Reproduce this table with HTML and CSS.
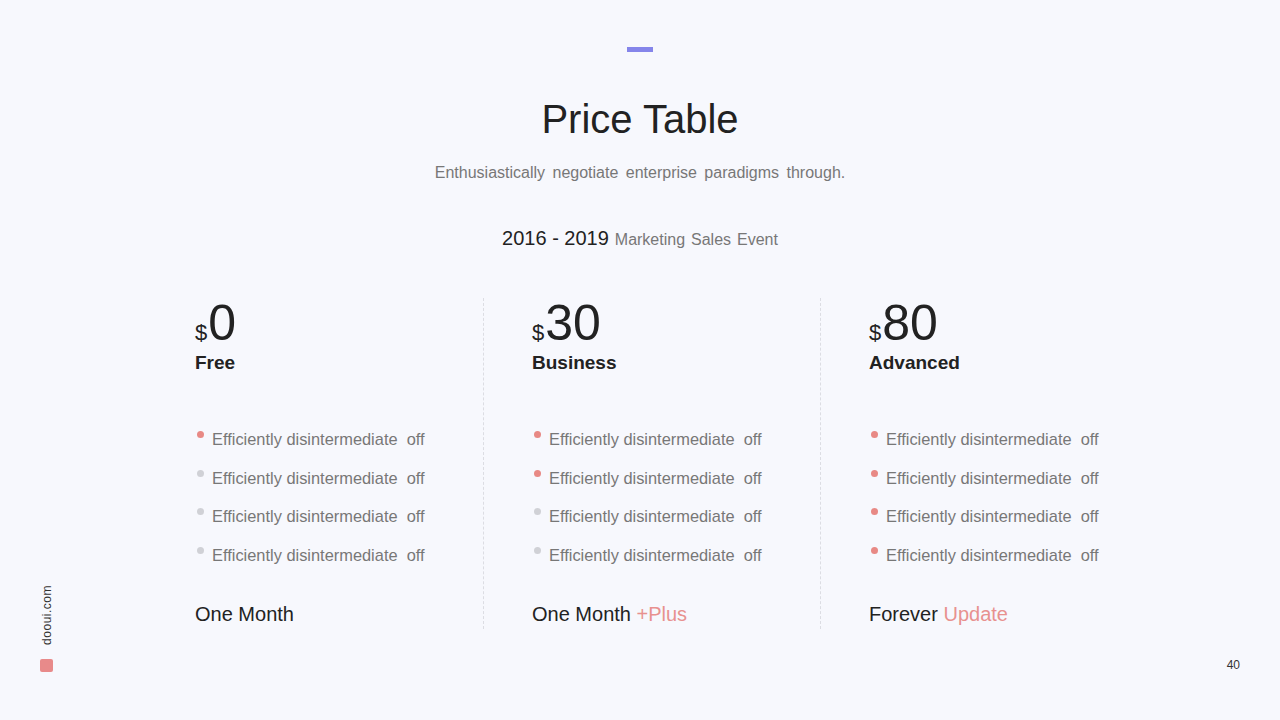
FILE: index.html
```html
<!DOCTYPE html>
<html lang="en">
<head>
  <meta charset="utf-8" />
  <title>Price Table</title>
  <link rel="stylesheet" href="styles.css">
</head>
<body>

  <div class="slide">
    <!-- 제목 -->
    <div class="accent-bar"></div>
    <h1 class="title">Price Table</h1>
    <p class="subtitle">Enthusiastically negotiate enterprise paradigms through.</p>
    <p class="event"><span class="event-year">2016 - 2019</span> Marketing Sales Event</p>

    <!-- 가격표 -->
    <div class="plans">
      <div class="plan">
        <div class="price"><span class="currency">$</span>0</div>
        <div class="plan-name">Free</div>
        <ul class="features">
          <li><span class="dot on"></span>Efficiently disintermediate&nbsp; off</li>
          <li><span class="dot"></span>Efficiently disintermediate&nbsp; off</li>
          <li><span class="dot"></span>Efficiently disintermediate&nbsp; off</li>
          <li><span class="dot"></span>Efficiently disintermediate&nbsp; off</li>
        </ul>
        <div class="term">One Month</div>
      </div>

      <div class="plan">
        <div class="price"><span class="currency">$</span>30</div>
        <div class="plan-name">Business</div>
        <ul class="features">
          <li><span class="dot on"></span>Efficiently disintermediate&nbsp; off</li>
          <li><span class="dot on"></span>Efficiently disintermediate&nbsp; off</li>
          <li><span class="dot"></span>Efficiently disintermediate&nbsp; off</li>
          <li><span class="dot"></span>Efficiently disintermediate&nbsp; off</li>
        </ul>
        <div class="term">One Month <span class="highlight">+Plus</span></div>
      </div>

      <div class="plan">
        <div class="price"><span class="currency">$</span>80</div>
        <div class="plan-name">Advanced</div>
        <ul class="features">
          <li><span class="dot on"></span>Efficiently disintermediate&nbsp; off</li>
          <li><span class="dot on"></span>Efficiently disintermediate&nbsp; off</li>
          <li><span class="dot on"></span>Efficiently disintermediate&nbsp; off</li>
          <li><span class="dot on"></span>Efficiently disintermediate&nbsp; off</li>
        </ul>
        <div class="term">Forever <span class="highlight">Update</span></div>
      </div>
    </div>

    <!-- 하단 -->
    <div class="brand">
      <span class="brand-text">dooui.com</span>
      <span class="brand-mark"></span>
    </div>
    <div class="page-num">40</div>
  </div>

</body>
</html>
```

FILE: styles.css
```css
body {
  margin: 0;
  background-color: #f7f8fd;
  font-family: "Liberation Sans", Arial, sans-serif;
  color: #222;
}

.slide {
  position: relative;
  width: 1280px;
  height: 720px;
  padding-top: 47px;
  box-sizing: border-box;
  display: flex;
  flex-direction: column;
  align-items: center;
}

.accent-bar {
  width: 26px;
  height: 5px;
  background-color: #8585ea;
}

.title {
  margin: 47px 0 0;
  font-size: 40px;
  line-height: 40px;
  font-weight: normal;
  color: #222;
}

.subtitle {
  margin: 24px 0 0;
  font-size: 16px;
  line-height: 20px;
  color: #777;
  word-spacing: 3px;
}

.event {
  margin: 43px 0 0;
  font-size: 16px;
  line-height: 24px;
  color: #777;
  word-spacing: 1.5px;
}

.event-year {
  font-size: 20px;
  color: #222;
  word-spacing: 0;
}

.plans {
  align-self: flex-start;
  margin: 46px 0 0 147px;
  display: flex;
}

.plan {
  width: 337px;
  box-sizing: border-box;
  padding: 0 0 3px 48px;
  border-right: 1px dashed #dcdde3;
}

.plan:last-child {
  border-right: none;
}

.price {
  font-size: 50px;
  line-height: 50px;
  color: #222;
}

.currency {
  font-size: 22px;
  line-height: 0;
  margin-right: 1px;
}

.plan-name {
  margin-top: 3px;
  font-size: 19px;
  line-height: 24px;
  font-weight: bold;
}

.features {
  list-style: none;
  margin: 54px 0 0;
  padding: 0;
  display: flex;
  flex-direction: column;
  gap: 18.7px;
}

.features li {
  display: flex;
  align-items: flex-start;
  font-size: 16.4px;
  line-height: 20px;
  color: #777;
}

.dot {
  width: 7px;
  height: 7px;
  margin: 2px 8px 0 2px;
  border-radius: 50%;
  background-color: #d0d1d6;
  flex-shrink: 0;
}

.dot.on {
  background-color: #e88985;
}

.term {
  margin-top: 37px;
  font-size: 20px;
  line-height: 24px;
  color: #222;
}

.highlight {
  color: #e8918f;
}

.brand {
  position: absolute;
  left: 40px;
  top: 585px;
  display: flex;
  flex-direction: column;
  align-items: center;
  gap: 14px;
}

.brand-text {
  writing-mode: vertical-rl;
  transform: rotate(180deg);
  font-size: 12px;
  color: #333;
  letter-spacing: 0.5px;
}

.brand-mark {
  width: 13px;
  height: 13px;
  margin-right: 1px;
  border-radius: 2px;
  background-color: #e88a8a;
}

.page-num {
  position: absolute;
  right: 40px;
  top: 658px;
  font-size: 12px;
  color: #333;
}
```
